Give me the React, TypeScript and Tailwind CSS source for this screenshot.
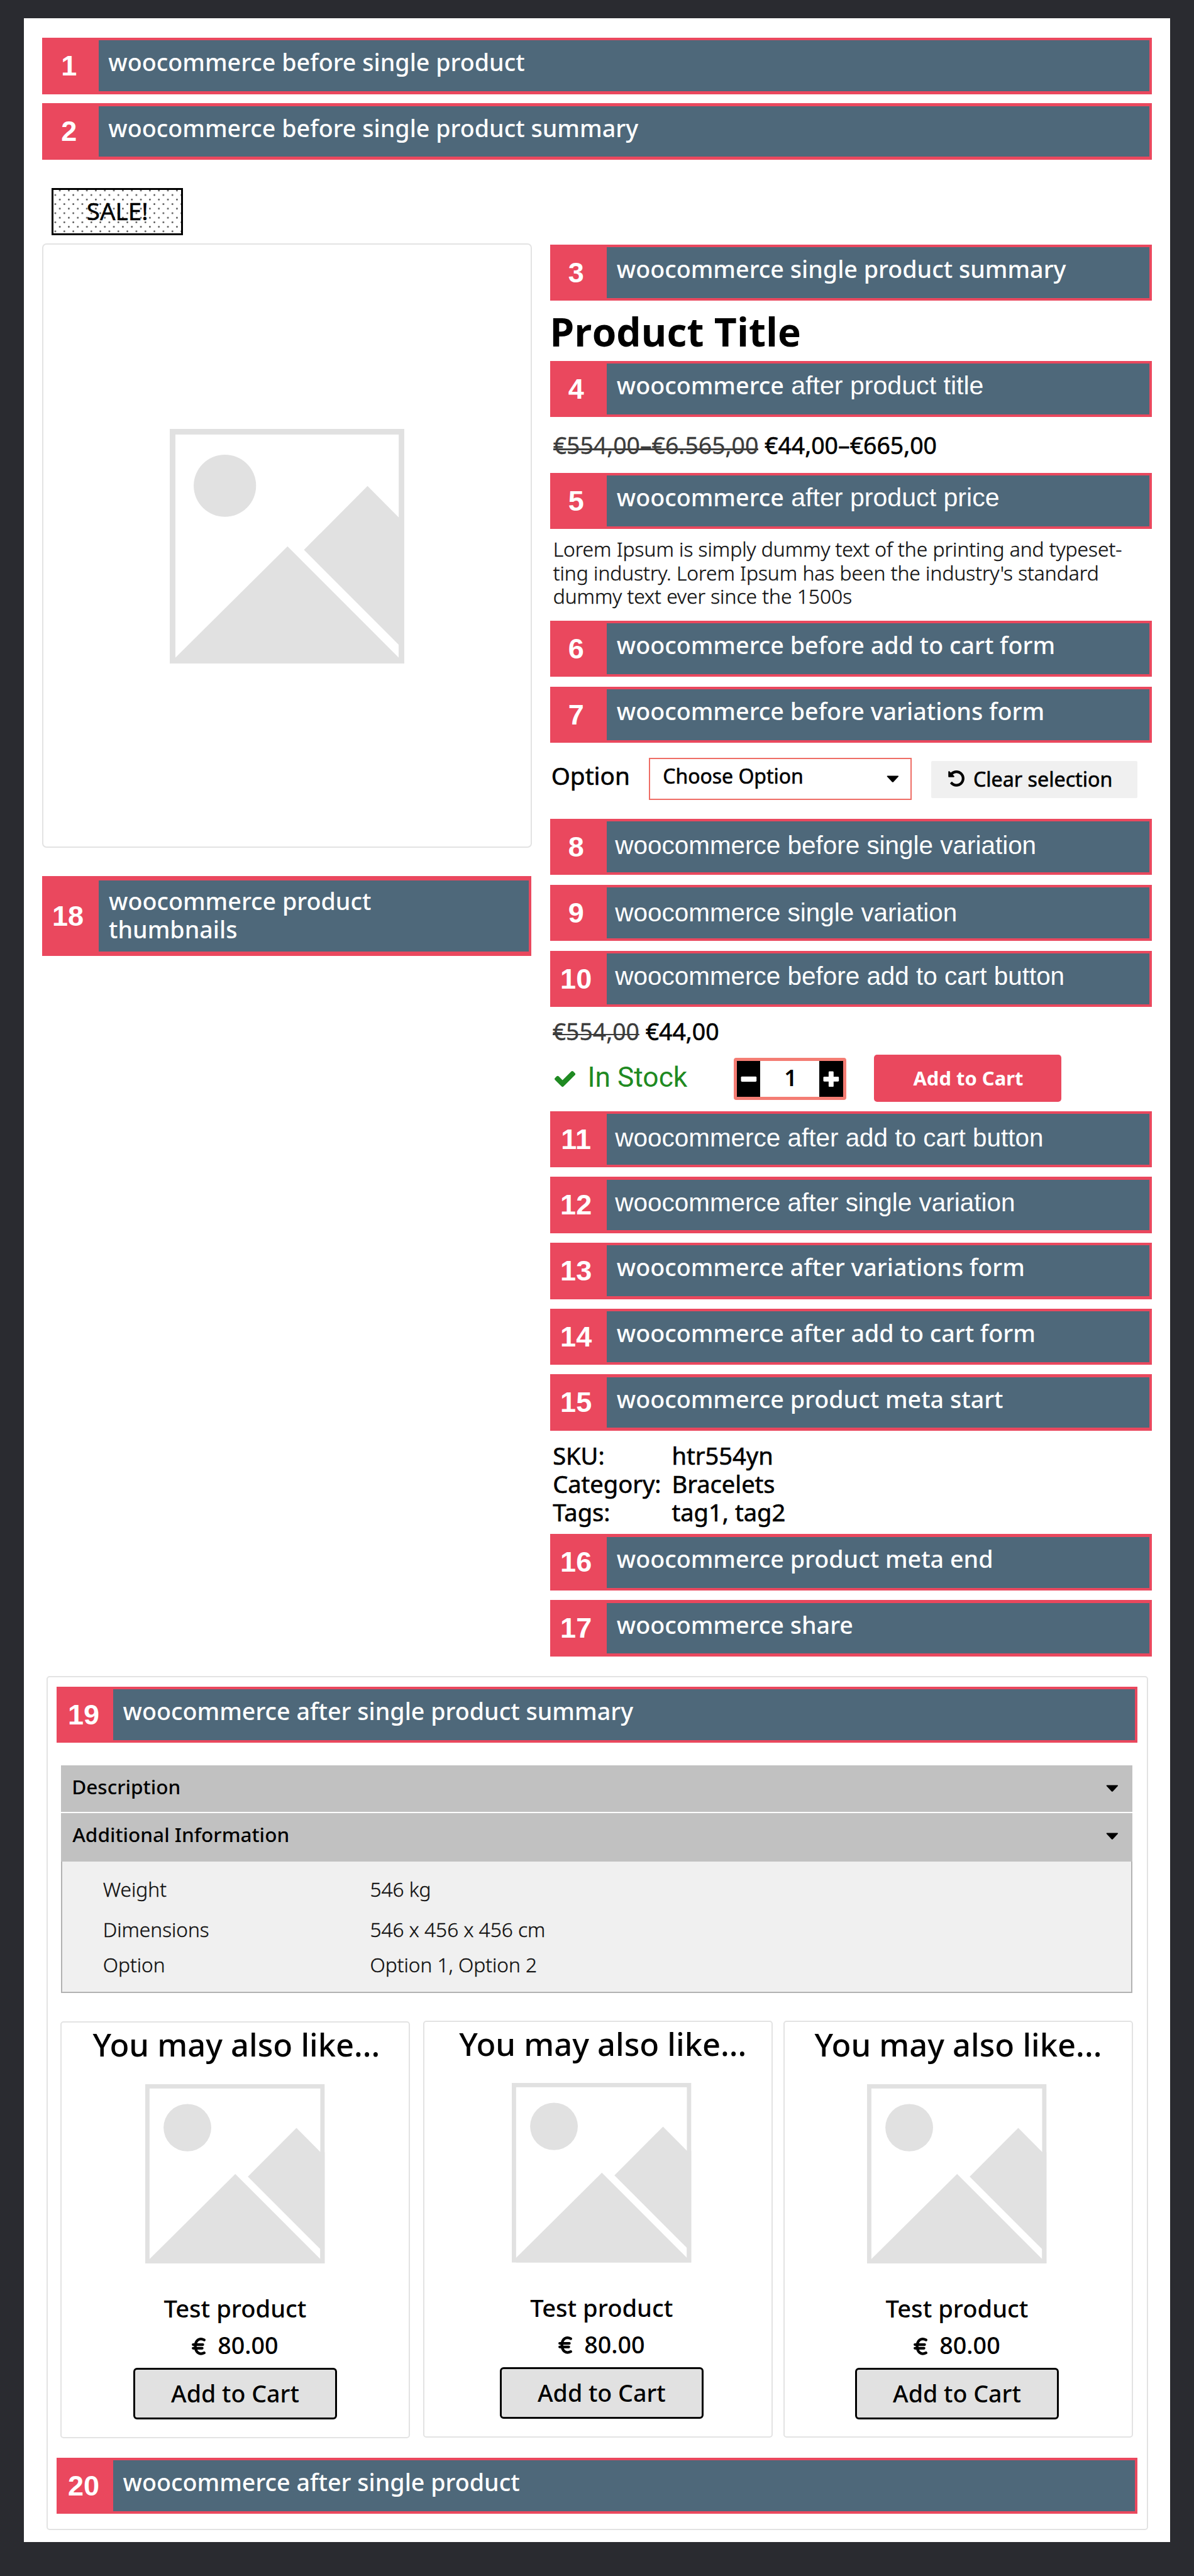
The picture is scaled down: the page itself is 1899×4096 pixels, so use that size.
import React from 'react';

const NOTO = "font-['Noto_Sans','Open_Sans',sans-serif]";
const ARIAL = "font-['Liberation_Sans',Arial,sans-serif]";

type HookBarProps = {
  n: number;
  children: React.ReactNode;
  className?: string;
  numClass?: string;
  /** Sets the label in the Arial-like face; the value nudges its line down. */
  arial?: string;
};

function HookBar({ n, children, className = '', numClass = 'pr-[8px]', arial }: HookBarProps) {
  return (
    <div className={`flex h-[90.5px] shrink-0 bg-[#ea485e] ${className}`}>
      <div
        className={`w-[90.8px] shrink-0 text-center text-[45.5px] font-bold leading-[91px] text-white ${ARIAL} ${numClass}`}
      >
        {n}
      </div>
      <div
        className={`my-[4.5px] mr-[4px] flex-1 whitespace-nowrap bg-[#4e687a] leading-[71px] text-white ${
          arial ? `pl-[13.5px] text-[40.9px] ${ARIAL} ${arial}` : `pl-[16px] text-[38.1px] font-medium ${NOTO}`
        }`}
      >
        {children}
      </div>
    </div>
  );
}

function Placeholder({ className }: { className: string }) {
  return (
    <svg viewBox="0 0 1000 1000" preserveAspectRatio="none" className={className}>
      <rect x="12" y="12" width="976" height="976" fill="none" stroke="#e1e1e1" strokeWidth="24" />
      <ellipse cx="235" cy="242" rx="133" ry="132" fill="#e1e1e1" />
      <path d="M24 974 L502 500 L976 974 V1000 H24 Z" fill="#e1e1e1" />
      <path d="M572 515 L843 243 L976 377 H1000 V1000 H976 V919 Z" fill="#e1e1e1" />
    </svg>
  );
}

function Caret({ className = '' }: { className?: string }) {
  return (
    <svg viewBox="0 0 20 11.5" className={`h-[11.5px] w-[20px] shrink-0 ${className}`}>
      <path d="M1.6 0.4 H18.4 Q20 0.6 19 2 L11.2 10.4 Q10 11.6 8.8 10.4 L1 2 Q0 0.6 1.6 0.4 Z" fill="#000" />
    </svg>
  );
}

function Undo() {
  return (
    <svg viewBox="0 128 1536 1536" className="mt-[15.5px] h-[26px] w-[26.5px] shrink-0">
      <path d="M1536 896q0 156-61 298t-164 245-245 164-298 61q-172 0-327-72.500t-264-204.500q-7-10-6.500-22.500t8.500-20.500l137-138q10-9 25-9 16 2 23 12 73 95 179 147t225 52q104 0 198.500-40.500t163.500-109.500 109.500-163.500 40.500-198.500-40.500-198.500-109.500-163.500-163.500-109.500-198.500-40.500q-98 0-188 35.500t-160 101.500l137 138q31 30 14 69-17 40-59 40h-448q-26 0-45-19t-19-45v-448q0-42 40-59 39-17 69 14l130 129q107-101 244.500-156.500t284.500-55.500q156 0 298 61t245 164 164 245 61 298z" />
    </svg>
  );
}

function Check() {
  return (
    <svg viewBox="121 334 1550 1188" preserveAspectRatio="none" className="ml-[6.5px] mt-[26.5px] h-[25.5px] w-[33.5px] shrink-0">
      <path
        fill="#1f8a22"
        d="M1671 566q0 40-28 68l-724 724-136 136q-28 28-68 28t-68-28l-136-136-362-362q-28-28-28-68t28-68l136-136q28-28 68-28t68 28l294 295 656-657q28-28 68-28t68 28l136 136q28 28 28 68z"
      />
    </svg>
  );
}

function Euro() {
  return (
    <svg viewBox="0 0 22 30" className="mt-[13px] h-[30px] w-[22px] shrink-0">
      <path
        d="M20 4.700 C12.500 0.800 5.800 5 5.800 15 C5.800 25 12.500 29.200 20 25.500 M2.200 12.200 H17.800 M2.200 18 H16.800"
        fill="none"
        stroke="#000"
        strokeWidth="4.300"
        strokeLinecap="round"
      />
    </svg>
  );
}

function ProductCard({ className, inner }: { className: string; inner: string }) {
  return (
    <div className={`h-[671px] w-[562px] shrink-0 rounded-[5px] border-[2.1px] border-[#e3e3e3] text-black ${className}`}>
      <div className={`flex flex-col items-center whitespace-nowrap font-medium ${inner}`}>
        <div className="ml-[4px] text-[51.2px] leading-[70px]">You may also like...</div>
        <Placeholder className="mt-[29px] h-[288.7px] w-[288.5px]" />
        <div className="mt-[45.3px] text-[38.6px] leading-[53px]">Test product</div>
        <div className="mt-[6.5px] flex text-[38.1px] leading-[52px]">
          <Euro />
          <span className="ml-[19.5px]">80.00</span>
        </div>
        <div className="mt-[10.9px] h-[82.9px] w-[327.5px] rounded-[6px] border-[3.1px] border-black bg-[#e1e1e1] text-center text-[38px] leading-[77.5px]">
          Add to Cart
        </div>
      </div>
    </div>
  );
}

function InfoRow({ label, value, className }: { label: string; value: string; className: string }) {
  return (
    <div className={`flex pl-[65px] ${className}`}>
      <span className="w-[429.5px]">{label}</span>
      <span>{value}</span>
    </div>
  );
}

export default function App() {
  return (
    <div className={`h-[4142px] w-[1920px] overflow-hidden bg-[#2a2b30] pl-[38px] pt-[29px] text-black [zoom:0.98895] ${NOTO}`}>
      <div className="h-[4058px] w-[1844px] bg-white pl-[29.5px] pt-[31.7px]">
        <div className="flex w-[1784.5px] flex-col gap-[15.1px]">
          <HookBar n={1} numClass="pr-[4px]">woocommerce before single product</HookBar>
          <HookBar n={2} numClass="pr-[4px]">woocommerce before single product summary</HookBar>
        </div>

        <div className="flex">
          <div className="w-[788px] shrink-0 pt-[45.5px]">
            <div className="ml-[15.5px] h-[76px] w-[211.5px] border-[3.1px] border-black bg-[radial-gradient(circle,#555_1px,transparent_1.7px),radial-gradient(circle,#555_1px,transparent_1.7px)] text-center text-[39px] leading-[67px] [-webkit-text-stroke:0.5px_#000] [background-position:3px_-6.4px,10.25px_0.9px] [background-size:14.5px_14.6px]">
              SALE!
            </div>
            <div className="mt-[13.3px] flex h-[971.7px] justify-center rounded-[7px] border-[2.1px] border-[#e3e3e3]">
              <Placeholder className="mt-[296px] h-[377.6px] w-[377.3px]" />
            </div>
            <div className="mt-[45.5px] flex h-[128.6px] w-[787px] bg-[#ea485e]">
              <div className={`w-[91.5px] shrink-0 pr-[8px] text-center text-[45.5px] font-bold leading-[128.8px] text-white ${ARIAL}`}>
                18
              </div>
              <div className="my-[7px] mr-[4px] flex-1 bg-[#4e687a] pl-[16px] pt-[9.8px] text-[38.1px] font-medium leading-[45.5px] text-white">
                woocommerce product
                <br />
                thumbnails
              </div>
            </div>
          </div>

          <div className="ml-[29.5px] flex w-[967px] shrink-0 flex-col pt-[136.3px]">
            <HookBar n={3}>woocommerce single product summary</HookBar>
            <div className="h-[96.9px] font-['Open_Sans',sans-serif] text-[63px] font-bold leading-[100px]">
              <span className="-ml-[1px]">Product Title</span>
            </div>
            <HookBar n={4}>
              woocommerce <span className={`ml-[1.5px] text-[41.6px] font-normal ${ARIAL}`}>after product title</span>
            </HookBar>
            <div className="h-[89.5px] whitespace-nowrap pl-[4.5px] text-[37.8px] leading-[91.5px]">
              <span className="relative inline-block text-[#3c3c3c] [-webkit-text-stroke:0.3px_#3c3c3c]">
                €554,00–€6.565,00
                <span className="absolute left-0 right-0 top-[50.5px] h-[2.5px] bg-[#3c3c3c]" />
              </span>{' '}
              <span className="[-webkit-text-stroke:0.6px_#000]">€44,00–€665,00</span>
            </div>
            <HookBar n={5}>
              woocommerce <span className={`ml-[1.5px] text-[41.6px] font-normal ${ARIAL}`}>after product price</span>
            </HookBar>
            <div className="h-[147.1px] whitespace-nowrap pl-[4.5px] pt-[12.8px] text-[32.1px] font-light leading-[37.8px] text-[#111] [-webkit-text-stroke:0.4px_#111]">
              Lorem Ipsum is simply dummy text of the printing and typeset-
              <br />
              ting industry. Lorem Ipsum has been the industry's standard
              <br />
              dummy text ever since the 1500s
            </div>
            <div className="flex flex-col gap-[15.3px]">
              <HookBar n={6}>woocommerce before add to cart form</HookBar>
              <HookBar n={7}>woocommerce before variations form</HookBar>
            </div>

            <div className="flex h-[122.1px] whitespace-nowrap [-webkit-text-stroke:0.6px_#000]">
              <div className="w-[159px] shrink-0 pl-[1.5px] text-[39.1px] leading-[106.5px]">Option</div>
              <div className="mt-[24.5px] flex h-[67px] w-[421.8px] shrink-0 justify-between border-[2.5px] border-[#ee6e66] pl-[20px] pr-[18px] text-[32.3px] leading-[54.5px]">
                Choose Option
                <Caret className="mt-[25.7px]" />
              </div>
              <div className="ml-[32px] mt-[29.4px] flex h-[59.5px] w-[331px] shrink-0 rounded-[2px] bg-[#f0f0f0] pl-[27.5px] text-[32.6px] leading-[58px]">
                <Undo />
                <span className="ml-[13.5px]">Clear selection</span>
              </div>
            </div>

            <div className="flex flex-col gap-[15.6px]">
              <HookBar n={8} arial="pt-[2.6px]">woocommerce before single variation</HookBar>
              <HookBar n={9} arial="pt-[4.6px]">woocommerce single variation</HookBar>
              <HookBar n={10} arial="pt-[1.3px]">woocommerce before add to cart button</HookBar>
            </div>

            <div className="h-[76.9px] whitespace-nowrap pl-[3.5px] text-[37.8px] leading-[78.5px]">
              <span className="relative inline-block text-[#3c3c3c] [-webkit-text-stroke:0.3px_#3c3c3c]">
                €554,00
                <span className="absolute left-0 right-0 top-[43px] h-[2.5px] bg-[#3c3c3c]" />
              </span>{' '}
              <span className="[-webkit-text-stroke:0.6px_#000]">€44,00</span>
            </div>
            <div className="flex h-[90.5px] whitespace-nowrap">
              <Check />
              <div className="ml-[20px] w-[235px] shrink-0 font-['Roboto',sans-serif] text-[44.8px] leading-[73.6px] text-[#1f8a22]">
                In Stock
              </div>
              <div className="mt-[4.8px] flex h-[67.8px] w-[181px] shrink-0 rounded-[4px] border-[5.5px] border-[#f47d74]">
                <div className="flex w-[38px] items-center justify-center bg-black">
                  <svg viewBox="0 0 26 26" className="h-[26px] w-[26px]">
                    <rect x="0.5" y="8.8" width="25" height="8.4" rx="1.5" fill="#fff" />
                  </svg>
                </div>
                <div className="flex-1 bg-white pl-[2px] text-center text-[36px] font-semibold leading-[54px]">1</div>
                <div className="flex w-[38px] items-center justify-center bg-black">
                  <svg viewBox="0 0 26 26" className="h-[26px] w-[26px]">
                    <rect x="0.5" y="9" width="25" height="8" rx="1.5" fill="#fff" />
                    <rect x="9" y="0.5" width="8" height="25" rx="1.5" fill="#fff" />
                  </svg>
                </div>
              </div>
              <div className="ml-[45px] h-[75.4px] w-[300.5px] shrink-0 rounded-[5px] bg-[#ea485e] pl-[2px] text-center text-[31.3px] font-bold leading-[75.4px] text-white">
                Add to Cart
              </div>
            </div>

            <div className="flex flex-col gap-[15.4px]">
              <HookBar n={11} arial="pt-[2.6px]">woocommerce after add to cart button</HookBar>
              <HookBar n={12} arial="pt-[1.3px]">woocommerce after single variation</HookBar>
              <HookBar n={13}>woocommerce after variations form</HookBar>
              <HookBar n={14}>woocommerce after add to cart form</HookBar>
              <HookBar n={15}>woocommerce product meta start</HookBar>
            </div>

            <div className="grid h-[166.4px] grid-cols-[191.5px_1fr] content-start whitespace-nowrap pl-[4px] pt-[17.5px] text-[38.5px] leading-[45.4px] [-webkit-text-stroke:0.6px_#000]">
              <span>SKU:</span>
              <span>htr554yn</span>
              <span>Category:</span>
              <span>Bracelets</span>
              <span>Tags:</span>
              <span>tag1, tag2</span>
            </div>

            <div className="flex flex-col gap-[15.5px]">
              <HookBar n={16}>woocommerce product meta end</HookBar>
              <HookBar n={17}>woocommerce share</HookBar>
            </div>
          </div>
        </div>

        <div className="ml-[7px] mt-[31.5px] h-[1373px] w-[1771.5px] rounded-[5px] border-[2.1px] border-[#e3e3e3] pt-[15px]">
          <HookBar n={19} numClass="pr-[4px]" className="ml-[14.5px] w-[1738px]">
            woocommerce after single product summary
          </HookBar>

          <div className="ml-[22px] mt-[36.5px] w-[1722.8px] text-[31.9px] font-medium">
            <div className="flex h-[75px] justify-between bg-[#c1c1c1] pl-[17px] pr-[22.7px] leading-[69px]">
              Description
              <Caret className="mt-[31px]" />
            </div>
            <div className="mt-[2px] flex h-[77.2px] justify-between bg-[#c1c1c1] pl-[18px] pr-[22.7px] leading-[69px]">
              Additional Information
              <Caret className="mt-[31px]" />
            </div>
            <div className="h-[211.3px] border-x-[2.1px] border-b-[2.1px] border-[#b2b2b2] bg-[#f0f0f0] pt-[12.8px] text-[32px] font-light text-[#111] [-webkit-text-stroke:0.4px_#111]">
              <InfoRow label="Weight" value="546 kg" className="leading-[64px]" />
              <InfoRow label="Dimensions" value="546 x 456 x 456 cm" className="leading-[64px]" />
              <InfoRow label="Option" value="Option 1, Option 2" className="leading-[51.2px]" />
            </div>
          </div>

          <div className="ml-[20.6px] mt-[44.3px] flex h-[672.2px]">
            <ProductCard className="mt-[1.2px]" inner="" />
            <ProductCard className="ml-[21.5px]" inner="pl-[12px]" />
            <ProductCard className="ml-[17.8px]" inner="pr-[4.8px] pt-[1.2px]" />
          </div>

          <HookBar n={20} numClass="pr-[4px]" className="ml-[14.5px] mt-[31px] w-[1738px]">
            woocommerce after single product
          </HookBar>
        </div>
      </div>
    </div>
  );
}
